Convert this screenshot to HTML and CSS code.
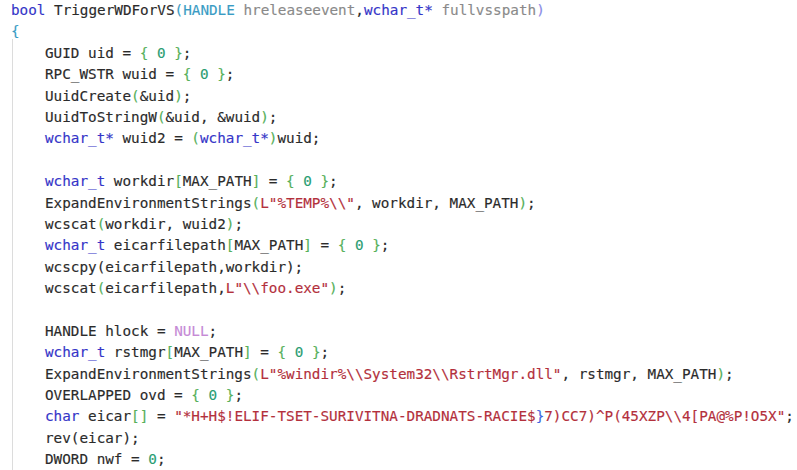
FILE: index.html
```html
<!DOCTYPE html>
<html>
<head>
<meta charset="utf-8">
<link rel="stylesheet" href="styles.css">
</head>
<body>
<div class="code">
<div class="line"><span class="k">bool</span> TriggerWDForVS<span class="t">(HANDLE</span> <span class="p">hreleaseevent</span>,<span class="k">wchar_t*</span> <span class="p">fullvsspath</span><span class="pp">)</span></div>
<div class="line"><span class="br">{</span></div>
<div class="body">
<div class="line">GUID uid = <span class="g">{</span> <span class="n">0</span> <span class="g">}</span>;</div>
<div class="line">RPC_WSTR wuid = <span class="g">{</span> <span class="n">0</span> <span class="g">}</span>;</div>
<div class="line">UuidCreate<span class="g">(</span>&amp;uid<span class="g">)</span>;</div>
<div class="line">UuidToStringW<span class="g">(</span>&amp;uid, &amp;wuid<span class="g">)</span>;</div>
<div class="line"><span class="k">wchar_t*</span> wuid2 = <span class="g">(</span><span class="k">wchar_t*</span><span class="g">)</span>wuid;</div>
<div class="line"> </div>
<div class="line"><span class="k">wchar_t</span> workdir<span class="g">[</span>MAX_PATH<span class="g">]</span> = <span class="g">{</span> <span class="n">0</span> <span class="g">}</span>;</div>
<div class="line">ExpandEnvironmentStrings<span class="g">(</span><span class="s">L"%TEMP%\\"</span>, workdir, MAX_PATH<span class="g">)</span>;</div>
<div class="line">wcscat<span class="g">(</span>workdir, wuid2<span class="g">)</span>;</div>
<div class="line"><span class="k">wchar_t</span> eicarfilepath<span class="g">[</span>MAX_PATH<span class="g">]</span> = <span class="g">{</span> <span class="n">0</span> <span class="g">}</span>;</div>
<div class="line">wcscpy(eicarfilepath,workdir);</div>
<div class="line">wcscat<span class="g">(</span>eicarfilepath,<span class="s">L"\\foo.exe"</span><span class="g">)</span>;</div>
<div class="line"> </div>
<div class="line">HANDLE hlock = <span class="m">NULL</span>;</div>
<div class="line"><span class="k">wchar_t</span> rstmgr<span class="g">[</span>MAX_PATH<span class="g">]</span> = <span class="g">{</span> <span class="n">0</span> <span class="g">}</span>;</div>
<div class="line">ExpandEnvironmentStrings<span class="g">(</span><span class="s">L"%windir%\\System32\\RstrtMgr.dll"</span>, rstmgr, MAX_PATH<span class="g">)</span>;</div>
<div class="line">OVERLAPPED ovd = <span class="g">{</span> <span class="n">0</span> <span class="g">}</span>;</div>
<div class="line"><span class="k">char</span> eicar<span class="g">[]</span> = <span class="s">"*H+H$!ELIF-TSET-SURIVITNA-DRADNATS-RACIE$</span><span class="bl">}</span><span class="s">7)CC7)^P(45XZP\\4[PA@%P!O5X"</span>;</div>
<div class="line">rev(eicar);</div>
<div class="line">DWORD nwf = <span class="n">0</span>;</div>
</div>
</div>
</body>
</html>
```
FILE: styles.css
```css
html, body {
  margin: 0;
  padding: 0;
  background: #ffffff;
}
.code {
  font-family: "DejaVu Sans Mono", "Liberation Mono", monospace;
  font-size: 14.3px;
  line-height: 21.4px;
  color: #2b2b2b;
  padding: 0 0 0 11px;
  -webkit-text-stroke: 0.15px currentColor;
}
.line {
  height: 21.4px;
  white-space: pre;
}
.body {
  margin-left: 1px;
  border-left: 1px solid #dcdcdc;
  padding-left: 32px;
  margin-top: -4px;
  padding-top: 4px;
}
.k { color: #3535c8; }
.t { color: #3a9cc4; }
.p { color: #8a8a8a; }
.pp { color: #8c8ce6; }
.br { color: #3a9cc4; }
.g { color: #56b05a; }
.n { color: #2a9d72; }
.s { color: #b3303c; }
.m { color: #c68ad6; }
.bl { color: #3f63e0; }
```
